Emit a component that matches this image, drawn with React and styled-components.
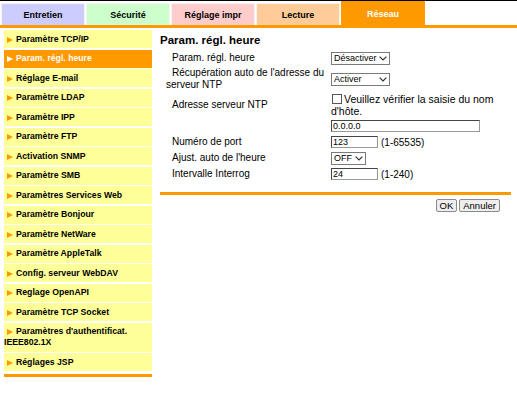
import styled, { createGlobalStyle } from "styled-components";

const GlobalStyle = createGlobalStyle`
  body {
    margin: 0;
    background: #ffffff;
    font-family: Arial, "Liberation Sans", sans-serif;
    color: #000000;
  }
`;

const tabs = [
  { label: "Entretien", bg: "#ccccff" },
  { label: "Sécurité", bg: "#ccffcc" },
  { label: "Réglage impr", bg: "#ffcccc" },
  { label: "Lecture", bg: "#ffcc99" },
  { label: "Réseau", bg: "#ff9900", active: true },
];

const menu = [
  "Paramètre TCP/IP",
  "Param. régl. heure",
  "Réglage E-mail",
  "Paramètre LDAP",
  "Paramètre IPP",
  "Paramètre FTP",
  "Activation SNMP",
  "Paramètre SMB",
  "Paramètres Services Web",
  "Paramètre Bonjour",
  "Paramètre NetWare",
  "Paramètre AppleTalk",
  "Config. serveur WebDAV",
  "Reglage OpenAPI",
  "Paramètre TCP Socket",
  "Paramètres d'authentificat. IEEE802.1X",
  "Réglages JSP",
];

const Dropdown = ({ w, value }) => (
  <SelectWrap>
    <Select $w={w} defaultValue={value}>
      <option>{value}</option>
    </Select>
    <Chevron width="8" height="5" viewBox="0 0 8 5">
      <path d="M0.6 0.6 L4 4 L7.4 0.6" fill="none" stroke="#333" strokeWidth="1.2" />
    </Chevron>
  </SelectWrap>
);

const App = () => {
  return (
    <Page>
      <GlobalStyle />
      <TopRule />
      <TabBar>
        {tabs.map((t) => (
          <Tab key={t.label} $bg={t.bg} $active={t.active}>
            {t.label}
          </Tab>
        ))}
      </TabBar>
      <Body>
        <Sidebar>
          <MenuList>
            {menu.map((m, i) => (
              <MenuItem key={m} $active={i === 1}>
                <Arrow $active={i === 1} />
                {m}
              </MenuItem>
            ))}
          </MenuList>
          <SideRule />
        </Sidebar>
        <Content>
          <Title>Param. régl. heure</Title>
          <Form>
            <Label>Param. régl. heure</Label>
            <Value>
              <Dropdown w={59} value="Désactiver" />
            </Value>

            <Label>Récupération auto de l'adresse du serveur NTP</Label>
            <Value>
              <Dropdown w={59} value="Activer" />
            </Value>

            <Label>Adresse serveur NTP</Label>
            <Value>
              <CheckLine>
                <Check type="checkbox" readOnly />
                Veuillez vérifier la saisie du nom d'hôte.
              </CheckLine>
            </Value>

            <Label />
            <Value>
              <Input $w={149} defaultValue="0.0.0.0" />
            </Value>

            <Label>Numéro de port</Label>
            <Value>
              <Input $w={47} defaultValue="123" />
              <Hint>(1-65535)</Hint>
            </Value>

            <Label>Ajust. auto de l'heure</Label>
            <Value>
              <Dropdown w={35} value="OFF" />
            </Value>

            <Label>Intervalle Interrog</Label>
            <Value>
              <Input $w={47} defaultValue="24" />
              <Hint>(1-240)</Hint>
            </Value>
          </Form>
          <ContentRule />
          <Actions>
            <Button>OK</Button>
            <Button>Annuler</Button>
          </Actions>
        </Content>
      </Body>
    </Page>
  );
};

export default App;

const Page = styled.div`
  width: 517px;
  height: 407px;
  overflow: hidden;
`;

const TopRule = styled.div`
  height: 1px;
  background: #000000;
`;

const TabBar = styled.div`
  display: flex;
  gap: 1px;
  height: 24px;
  padding-left: 1px;
  border-bottom: 3px solid #ff9900;
`;

const Tab = styled.div`
  width: 84px;
  box-sizing: border-box;
  margin-top: ${(p) => (p.$active ? "0" : "2px")};
  background: ${(p) => p.$bg};
  border: 1px solid ${(p) => (p.$active ? p.$bg : "#f4f4f4")};
  border-bottom: none;
  color: ${(p) => (p.$active ? "#ffffff" : "#000000")};
  font-size: 9px;
  font-weight: bold;
  display: flex;
  align-items: center;
  justify-content: center;
`;

const Body = styled.div`
  display: flex;
  align-items: flex-start;
  padding-top: 2px;
`;

const Sidebar = styled.div`
  width: 148px;
  margin-left: 4px;
`;

const MenuList = styled.div`
  display: flex;
  flex-direction: column;
  gap: 1.5px;
`;

const MenuItem = styled.div`
  background: ${(p) => (p.$active ? "#ff9900" : "#ffff99")};
  color: ${(p) => (p.$active ? "#ffffff" : "#000000")};
  font-size: 8.7px;
  font-weight: bold;
  line-height: 11px;
  padding: 3.5px 2px 3.5px 0;
`;

const Arrow = styled.span`
  display: inline-block;
  width: 0;
  height: 0;
  margin: 0 3px 0 3px;
  border-top: 3.5px solid transparent;
  border-bottom: 3.5px solid transparent;
  border-left: 6px solid ${(p) => (p.$active ? "#ffffff" : "#ff9900")};
  vertical-align: -1px;
`;

const SideRule = styled.div`
  height: 3px;
  margin-top: 3px;
  background: #ff9900;
`;

const Content = styled.div`
  width: 351px;
  margin-left: 8px;
`;

const Title = styled.div`
  font-size: 11.5px;
  font-weight: bold;
  margin-top: 2px;
  line-height: 16px;
`;

const Form = styled.div`
  display: grid;
  grid-template-columns: 171px 1fr;
  row-gap: 2px;
  margin-top: 3px;
  font-size: 10px;
`;

const Label = styled.div`
  padding-left: 6px;
  text-indent: 6px;
  line-height: 12px;
  align-self: center;
`;

const Value = styled.div`
  display: flex;
  align-items: center;
  gap: 3px;
  min-height: 14px;
`;

const SelectWrap = styled.span`
  position: relative;
  display: inline-block;
  line-height: 0;
`;

const Select = styled.select`
  appearance: none;
  width: ${(p) => p.$w}px;
  height: 13px;
  box-sizing: border-box;
  padding: 0 10px 0 2px;
  font-family: Arial, "Liberation Sans", sans-serif;
  font-size: 9px;
  color: #000000;
  border: 1px solid #7a7a7a;
  border-radius: 0;
  background: #ffffff;
`;

const Chevron = styled.svg`
  position: absolute;
  right: 3px;
  top: 4px;
  pointer-events: none;
`;

const Input = styled.input`
  width: ${(p) => p.$w}px;
  height: 12px;
  box-sizing: border-box;
  padding: 0 1px;
  font-family: Arial, "Liberation Sans", sans-serif;
  font-size: 9px;
  border: 1px solid #9a9a9a;
  border-top-color: #444444;
  border-left-color: #444444;
`;

const CheckLine = styled.div`
  line-height: 12px;
  font-size: 10.5px;
`;

const Check = styled.input`
  appearance: none;
  width: 10px;
  height: 10px;
  margin: 0 2px 0 1px;
  border: 1px solid #555555;
  background: #ffffff;
  vertical-align: -1px;
`;

const Hint = styled.span`
  font-size: 10px;
`;

const ContentRule = styled.div`
  height: 3px;
  margin-top: 11px;
  background: #ff9900;
`;

const Actions = styled.div`
  display: flex;
  justify-content: flex-end;
  gap: 2px;
  margin-top: 4px;
  padding-right: 11px;
`;

const Button = styled.button`
  font-family: Arial, "Liberation Sans", sans-serif;
  font-size: 9.5px;
  height: 13px;
  padding: 0 3px;
  line-height: 11px;
  border: 1px solid #8a8a8a;
  border-radius: 2px;
  background: #eeeeee;
`;
